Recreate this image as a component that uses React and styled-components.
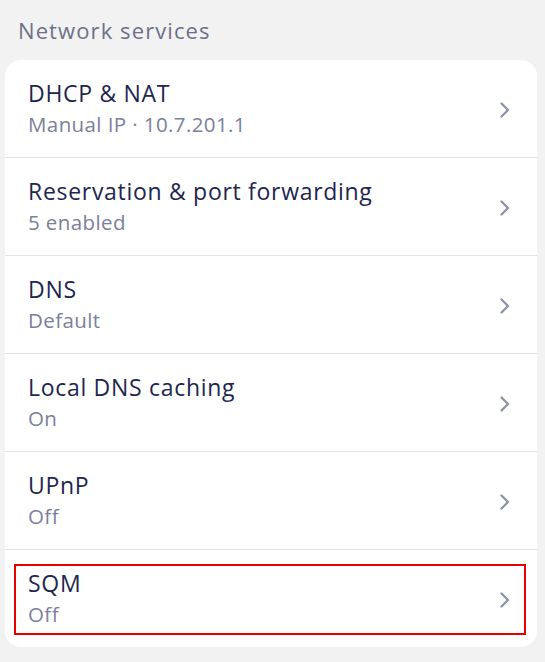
import React from 'react';
import styled, { createGlobalStyle } from 'styled-components';

const GlobalStyle = createGlobalStyle`
  html, body {
    margin: 0;
    padding: 0;
    background: #f2f2f2;
  }
  body {
    font-family: "Open Sans", "Noto Sans", sans-serif;
    -webkit-font-smoothing: antialiased;
  }
`;

const services = [
  { title: 'DHCP & NAT', value: 'Manual IP · 10.7.201.1' },
  { title: 'Reservation & port forwarding', value: '5 enabled' },
  { title: 'DNS', value: 'Default' },
  { title: 'Local DNS caching', value: 'On' },
  { title: 'UPnP', value: 'Off' },
  { title: 'SQM', value: 'Off', highlighted: true },
];

const Page = styled.div`
  padding: 12px 8px 13px 5px;
`;

const SectionTitle = styled.h2`
  margin: 0 0 12px 13px;
  font-size: 22px;
  font-weight: 400;
  line-height: 36px;
  letter-spacing: 1.1px;
  color: #6c7189;
`;

const Card = styled.ul`
  list-style: none;
  margin: 0;
  padding: 0;
  background: #fff;
  border-radius: 16px;
  overflow: hidden;
`;

const Row = styled.li`
  padding: 14px 11px 12px 9px;
  & + & {
    border-top: 1px solid #e1e2e9;
  }
`;

const RowInner = styled.button`
  display: flex;
  align-items: center;
  width: 100%;
  box-sizing: border-box;
  height: 71px;
  padding: 0 13px 0 12px;
  border: 2px solid ${p => (p.$highlighted ? '#e60000' : 'transparent')};
  background: none;
  font: inherit;
  text-align: left;
  cursor: pointer;
`;

const Texts = styled.div`
  flex: 1;
  display: flex;
  flex-direction: column;
  gap: 1px;
  margin-top: -3px;
`;

const Title = styled.span`
  font-size: 23px;
  line-height: 30px;
  letter-spacing: 0.7px;
  color: #1e2650;
`;

const Value = styled.span`
  font-size: 20.5px;
  line-height: 30px;
  letter-spacing: 0.4px;
  color: #7b809a;
`;

const Chevron = () => (
  <svg width="12" height="18" viewBox="0 0 12 18" fill="none">
    <path d="M2.5 2.5L9 9l-6.5 6.5" stroke="#8e93a8" strokeWidth="2.4" strokeLinecap="round" strokeLinejoin="round" />
  </svg>
);

export default function App() {
  return (
    <>
      <GlobalStyle />
      <Page>
        <SectionTitle>Network services</SectionTitle>
        <Card>
          {services.map(s => (
            <Row key={s.title}>
              <RowInner $highlighted={s.highlighted}>
                <Texts>
                  <Title>{s.title}</Title>
                  <Value>{s.value}</Value>
                </Texts>
                <Chevron />
              </RowInner>
            </Row>
          ))}
        </Card>
      </Page>
    </>
  );
}
